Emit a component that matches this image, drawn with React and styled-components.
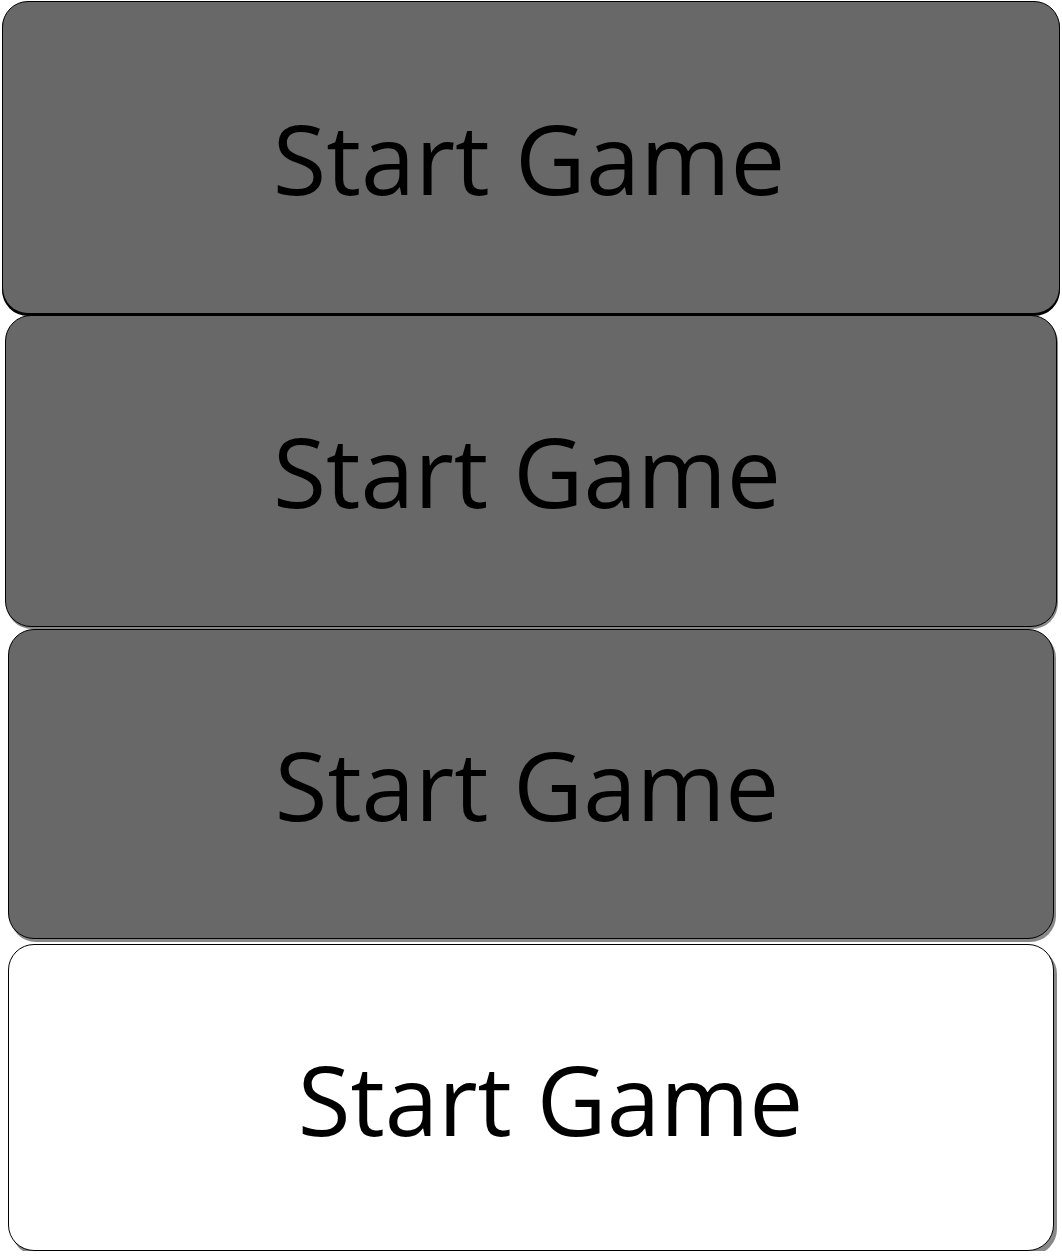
import styled, { createGlobalStyle } from 'styled-components';

const GlobalStyle = createGlobalStyle`
  body {
    margin: 0;
    background: #fff;
    font-family: "Open Sans", "Noto Sans", sans-serif;
  }
`;

const Menu = styled.div`
  display: flex;
  flex-direction: column;
  padding: 1px 0 0;
`;

const MenuButton = styled.button`
  display: flex;
  align-items: center;
  justify-content: center;
  height: ${(p) => p.$h}px;
  margin: 0 ${(p) => p.$inset}px ${(p) => p.$gap}px;
  padding: ${(p) => p.$pad};
  border: 1px solid #000;
  border-radius: 26px;
  background: ${(p) => (p.$light ? '#fff' : '#686868')};
  color: #000;
  font-family: "Open Sans", "Noto Sans", sans-serif;
  font-size: ${(p) => p.$size}px;
  line-height: 1;
  box-shadow: ${(p) => p.$shadow};
  cursor: pointer;
`;

const buttons = [
  { h: 313, inset: 2, gap: 1, size: 97.5, pad: '0 4px 0 0', shadow: '0 2px 0 #000' },
  { h: 312, inset: 5, gap: 2, size: 96.7, pad: '0 8px 0 0', shadow: '1px 2px 0 #888' },
  { h: 310, inset: 8, gap: 5, size: 96, pad: '0 8px 0 0', shadow: '2px 3px 0 #888' },
  { h: 307, inset: 8, gap: 0, size: 96.2, pad: '4px 0 0 39px', shadow: '3px 4px 0 #888', light: true },
];

const App = () => {
  return (
    <Menu>
      <GlobalStyle />
      {buttons.map((b, i) => (
        <MenuButton
          key={i}
          $h={b.h}
          $inset={b.inset}
          $gap={b.gap}
          $size={b.size}
          $pad={b.pad}
          $shadow={b.shadow}
          $light={b.light}
        >
          Start Game
        </MenuButton>
      ))}
    </Menu>
  );
};

export default App;
